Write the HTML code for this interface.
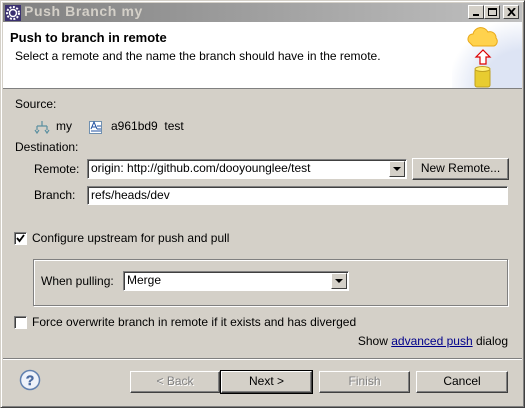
<!DOCTYPE html>
<html><head><meta charset="utf-8"><style>
*{box-sizing:border-box;margin:0;padding:0}
body{width:525px;height:408px;overflow:hidden;background:#d4d0c8;font-family:"Liberation Sans","Noto Sans CJK KR",sans-serif;font-size:12px;color:#000;position:relative}
.a{position:absolute;white-space:nowrap}
.win{position:absolute;left:0;top:0;width:525px;height:408px;border:1px solid #404040;border-top-color:#d4d0c8;border-left-color:#d4d0c8;box-shadow:inset 1px 1px 0 #fff,inset -1px -1px 0 #808080}
.tb{position:absolute;left:3px;top:3px;width:519px;height:19px;background:linear-gradient(90deg,#808080,#c0c0c0)}
.wb{position:absolute;top:2px;width:16px;height:14px;background:#d4d0c8;border:1px solid;border-color:#fff #404040 #404040 #fff}
.hdr{position:absolute;left:3px;top:22px;width:519px;height:67px;background:#fff;border-bottom:1px solid #808080}
.field{position:absolute;background:#fff;border:1px solid;border-color:#808080 #fff #fff #808080;box-shadow:inset 1px 1px 0 #404040;padding:2px 3px;line-height:13px}
.dd{position:absolute;width:16px;background:#d4d0c8;border:1px solid;border-color:#fff #404040 #404040 #fff}
.dd:after{content:"";position:absolute;left:3px;top:5px;border:4px solid transparent;border-top:4px solid #000;border-bottom:0}
.btn{position:absolute;background:#d4d0c8;border:1px solid;border-color:#fff #404040 #404040 #fff;box-shadow:inset -1px -1px 0 #808080;text-align:center;line-height:19px}
.cb{position:absolute;width:13px;height:13px;background:#fff;border:1px solid;border-color:#808080 #fff #fff #808080;box-shadow:inset 1px 1px 0 #404040}
.dis{color:#808080;text-shadow:1px 1px 0 #fff}
</style></head><body>
<div class="win"></div>
<div class="tb">
<svg class="a" style="left:2px;top:2px" width="16" height="16" viewBox="0 0 16 16"><rect width="16" height="16" fill="#3a3070"/><circle cx="8" cy="8" r="6" fill="none" stroke="#fff" stroke-width="2" stroke-dasharray="2 1.5"/><circle cx="8" cy="8" r="3.5" fill="none" stroke="#fff" stroke-width="1.5"/></svg>
<div class="a" style="left:21px;top:0px;font-weight:bold;font-size:14px;color:#d4d0c8;letter-spacing:.6px">Push Branch my</div>
<div class="wb" style="left:465px"><div class="a" style="left:4px;top:8px;width:6px;height:2px;background:#000"></div></div>
<div class="wb" style="left:481px"><div class="a" style="left:3px;top:2px;width:9px;height:8px;border:1px solid #000;border-top-width:2px"></div></div>
<div class="wb" style="left:500px"><svg class="a" style="left:3px;top:2px" width="9" height="8"><path d="M1 0l7 8M8 0l-7 8" stroke="#000" stroke-width="1.8"/></svg></div>
</div>
<div class="hdr">
<div class="a" style="right:0;top:0;width:70px;height:66px;background:radial-gradient(ellipse at 100% 100%,#dde4f4 40%,#fff 75%)"></div>
<div class="a" style="left:7px;top:8px;font-weight:bold;font-size:13px">Push to branch in remote</div>
<div class="a" style="left:12px;top:27px">Select a remote and the name the branch should have in the remote.</div>
<svg class="a" style="left:463px;top:2px" width="34" height="66" viewBox="0 0 34 66"><path d="M4 19a5 5 0 0 1 3-9a8 8 0 0 1 15-2a6 6 0 0 1 8 6a5 5 0 0 1-2 8H7z" fill="#ffd24d" stroke="#e8a818"/><path d="M14 40v-7h-4l7-7 7 7h-4v7z" fill="#fff" stroke="#d00" stroke-width="1.2"/><rect x="9" y="45" width="15" height="18" rx="2" fill="#e8cc30" stroke="#c0a020"/><ellipse cx="16.5" cy="45" rx="7.5" ry="2.5" fill="#fff07a" stroke="#c0a020"/></svg>
</div>
<div class="a" style="left:15px;top:97px">Source:</div>
<svg class="a" style="left:34px;top:120px" width="16" height="14" viewBox="0 0 16 14"><path d="M8 1v5M3 6h10M3 6v4M13 6v4M1 10l2 3 2-3M11 10l2 3 2-3" fill="none" stroke="#5a8fa0" stroke-width="1.2"/></svg>
<div class="a" style="left:56px;top:119px">my</div>
<svg class="a" style="left:88px;top:119px" width="15" height="15" viewBox="0 0 15 15"><rect x="1.5" y="2.5" width="12" height="12" fill="#fff" stroke="#7090b0"/><path d="M3 10l3-7 3 7M4 8h4M9 7h4M9 10h4M3 12h10" stroke="#2050a0" fill="none"/></svg>
<div class="a" style="left:111px;top:119px">a961bd9&nbsp;&nbsp;test</div>
<div class="a" style="left:15px;top:140px">Destination:</div>
<div class="a" style="left:34px;top:162px">Remote:</div>
<div class="field" style="left:87px;top:159px;width:320px;height:20px">origin: http://github.com/dooyounglee/test</div>
<div class="dd" style="left:389px;top:161px;height:16px"></div>
<div class="btn" style="left:412px;top:158px;width:97px;height:22px">New Remote...</div>
<div class="a" style="left:34px;top:188px">Branch:</div>
<div class="field" style="left:87px;top:186px;width:421px;height:19px">refs/heads/dev</div>
<div class="cb" style="left:14px;top:232px"><svg class="a" style="left:1px;top:1px" width="9" height="9"><path d="M1 4l2.5 3L8 1" stroke="#000" stroke-width="1.8" fill="none"/></svg></div>
<div class="a" style="left:32px;top:231px">Configure upstream for push and pull</div>
<div class="a" style="left:33px;top:259px;width:475px;height:47px;border:1px solid #808080;box-shadow:1px 1px 0 #fff,inset 1px 1px 0 #fff"></div>
<div class="a" style="left:41px;top:274px">When pulling:</div>
<div class="field" style="left:123px;top:271px;width:226px;height:20px">Merge</div>
<div class="dd" style="left:331px;top:273px;height:16px"></div>
<div class="cb" style="left:14px;top:316px"></div>
<div class="a" style="left:32px;top:315px">Force overwrite branch in remote if it exists and has diverged</div>
<div class="a" style="right:17px;top:334px">Show <span style="color:#00008b;text-decoration:underline">advanced push</span> dialog</div>
<div class="a" style="left:3px;top:358px;width:519px;height:2px;border-top:1px solid #808080;border-bottom:1px solid #fff"></div>
<svg class="a" style="left:19px;top:369px" width="22" height="22" viewBox="0 0 22 22"><circle cx="11" cy="11" r="9.5" fill="#eef2fa" stroke="#6080b0" stroke-width="1.5"/><text x="11" y="16" font-family="Liberation Sans" font-weight="bold" font-size="14" fill="#4a6aa0" stroke="#4a6aa0" stroke-width=".4" text-anchor="middle">?</text></svg>
<div class="btn dis" style="left:130px;top:371px;width:90px;height:22px">&lt; Back</div>
<div class="btn" style="left:221px;top:371px;width:91px;height:22px;outline:1px solid #000">Next &gt;</div>
<div class="btn dis" style="left:319px;top:371px;width:91px;height:22px">Finish</div>
<div class="btn" style="left:416px;top:371px;width:92px;height:22px">Cancel</div>
</body></html>
